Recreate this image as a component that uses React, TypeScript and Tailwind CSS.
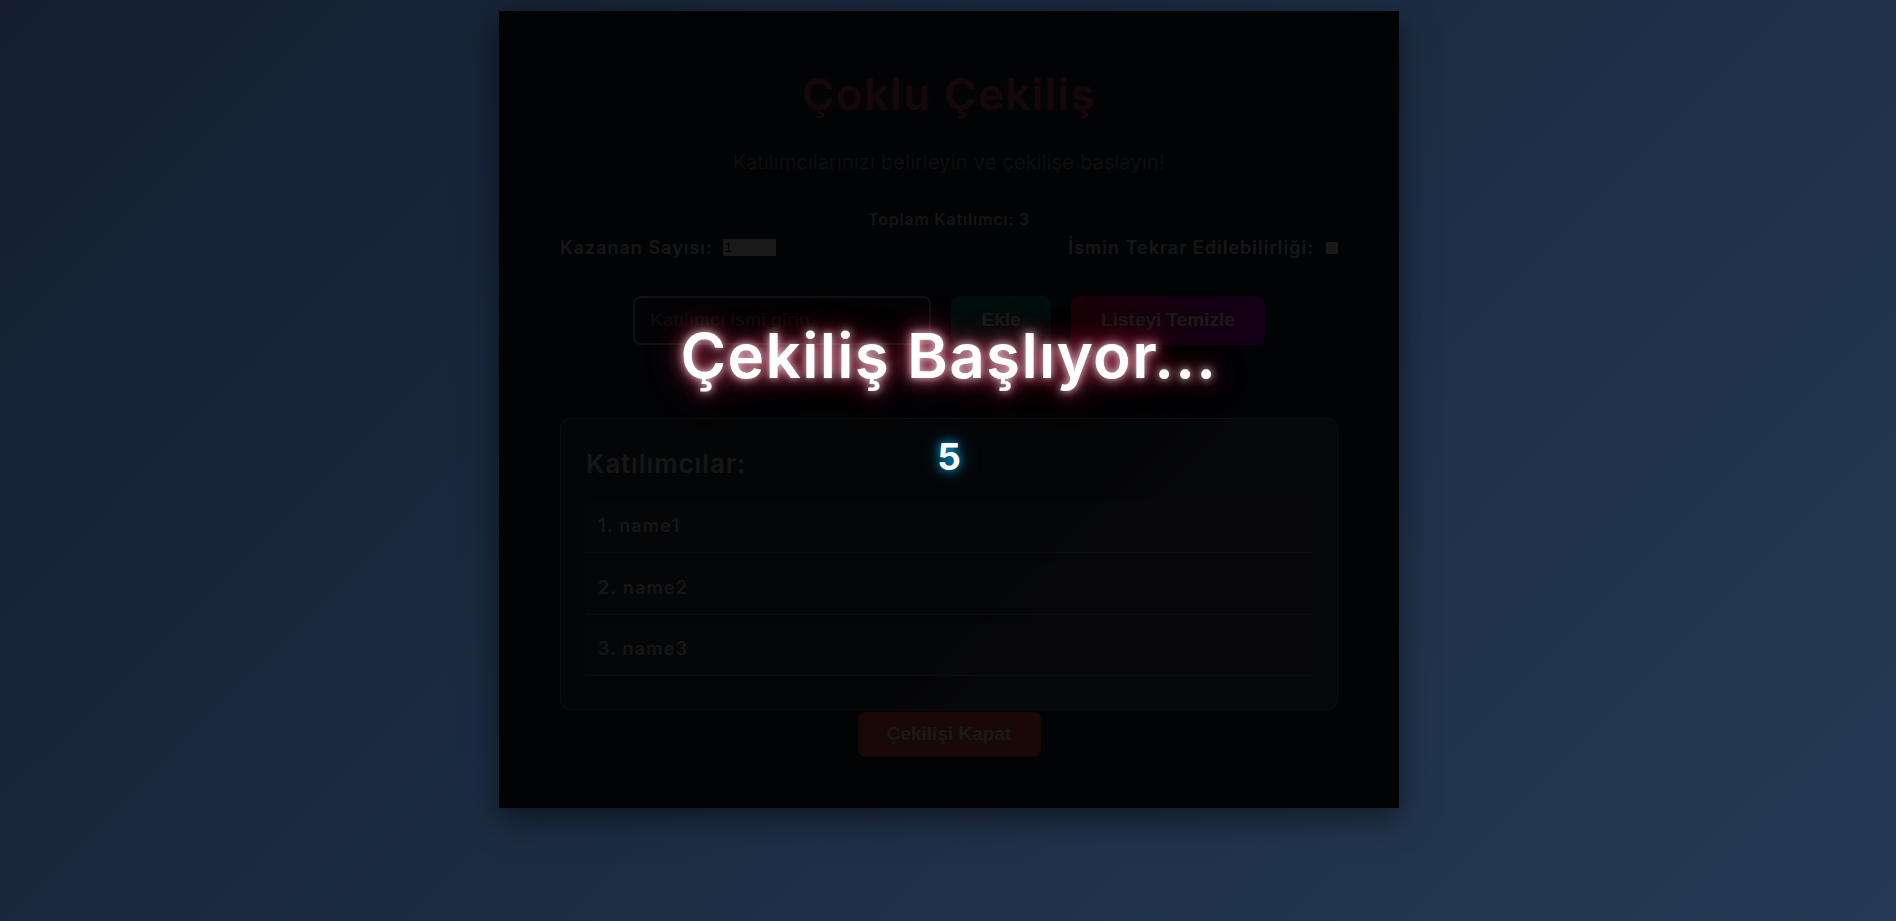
import React from "react";

const participants = ["name1", "name2", "name3"];

export default function App() {
  return (
    <div className="min-h-screen w-full bg-[linear-gradient(135deg,#141e30_0%,#243b55_100%)] pt-[11px] pl-[2px] font-[Inter,sans-serif]">
      <div className="relative mx-auto w-[900px] bg-[#1a2232] px-[61px] pt-[54px] pb-[51px] shadow-[0_10px_30px_rgba(0,0,0,0.5)]">
        <h1 className="text-center text-[44px] leading-[58px] font-semibold tracking-[1.4px] text-[#c8506e] [text-shadow:0_0_10px_rgba(200,60,100,0.4)]">
          Çoklu Çekiliş
        </h1>
        <p className="mt-[26px] text-center text-[20px] leading-[27px] font-light tracking-[0.3px] text-[#999999]">
          Katılımcılarınızı belirleyin ve çekilişe başlayın!
        </p>
        <div className="mt-[32px] text-center text-[16px] leading-[22px] font-semibold tracking-[0.8px] text-[#cccccc]">
          Toplam Katılımcı: 3
        </div>
        <div className="mt-[4px] flex h-[27px] items-center justify-between">
          <div className="flex items-center gap-[10px]">
            <span className="text-[18px] font-semibold tracking-[1px] text-[#e0e0e0]">Kazanan Sayısı:</span>
            <span className="flex h-[17px] w-[53px] items-center bg-white px-[2px] font-['Liberation_Sans',Arial,sans-serif] text-[13px] text-black">
              1
            </span>
          </div>
          <div className="flex items-center gap-[12px]">
            <span className="text-[18px] font-semibold tracking-[1px] text-[#e0e0e0]">İsmin Tekrar Edilebilirliği:</span>
            <span className="inline-block h-[12px] w-[12px] rounded-[2px] bg-white" />
          </div>
        </div>
        <div className="mt-[35px] flex h-[49px] items-stretch justify-center gap-[20px]">
          <div className="flex w-[298px] items-center rounded-[8px] border-2 border-[#b0b0b0] bg-white/[0.02] pl-[15px] font-['Liberation_Sans',Arial,sans-serif] text-[18px] font-bold text-[#707070]">
            Katılımcı ismi girin
          </div>
          <button className="w-[100px] rounded-[8px] bg-[linear-gradient(90deg,#0b8c88,#0e8a82)] font-['Liberation_Sans',Arial,sans-serif] text-[19px] font-bold text-white">
            Ekle
          </button>
          <button className="w-[194px] rounded-[8px] bg-[linear-gradient(90deg,#f0134a,#c000e0)] font-['Liberation_Sans',Arial,sans-serif] text-[19px] font-bold text-white">
            Listeyi Temizle
          </button>
        </div>
        <div className="mt-[73px] h-[292px] rounded-[10px] border border-white/40 bg-[linear-gradient(135deg,rgba(255,255,255,0.09)_0%,rgba(255,255,255,0.09)_57%,rgba(255,255,255,0.16)_63%,rgba(255,255,255,0.16)_100%)] p-[25px]">
          <h2 className="mb-[17px] text-[26px] leading-[39px] font-semibold tracking-[0.9px] text-[#e0e0e0]">Katılımcılar:</h2>
          <ul>
            {participants.map((p, i) => (
              <li
                key={p}
                className="mb-[8.5px] border-b border-white/25 bg-white/[0.05] px-[12px] py-[14px] text-[18px] leading-[24px] font-semibold tracking-[1.2px] text-[#dddddd]"
              >
                {i + 1}. {p}
              </li>
            ))}
          </ul>
        </div>
        <div className="mt-[2px] flex justify-center">
          <button className="h-[45px] w-[183px] rounded-[8px] bg-[#ff5722] font-['Liberation_Sans',Arial,sans-serif] text-[19px] font-bold text-white">
            Çekilişi Kapat
          </button>
        </div>

        <div className="absolute inset-0 flex flex-col items-center justify-center bg-black/90 pb-[20px]">
          <div className="text-[62px] leading-[72px] font-semibold tracking-[1.3px] text-white [text-shadow:0_0_8px_rgba(255,255,255,0.8),0_0_18px_rgba(255,90,130,0.85),0_0_34px_rgba(255,30,80,0.5)]">
            Çekiliş Başlıyor...
          </div>
          <div className="mt-[43px] text-[37px] leading-[44px] font-bold text-white [text-shadow:0_0_8px_rgba(0,190,255,0.9),0_0_20px_rgba(0,160,240,0.6)]">
            5
          </div>
        </div>
      </div>
    </div>
  );
}
